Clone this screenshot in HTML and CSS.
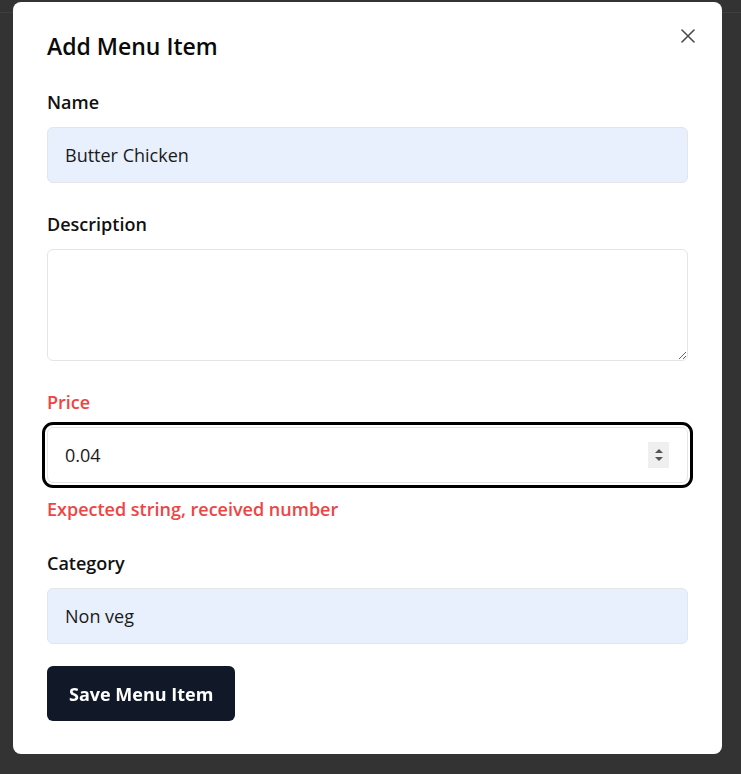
FILE: index.html
```html
<!DOCTYPE html>
<html lang="en">
<head>
    <meta charset="UTF-8">
    <meta name="viewport" content="width=device-width, initial-scale=1.0">
    <title>Add Menu Item</title>
    <link rel="stylesheet" href="styles.css">
</head>
<body>
    <div class="topbar"></div>
    <div class="modal">
        <button class="close-btn" type="button" aria-label="Close">
            <svg width="14" height="14" viewBox="0 0 14 14">
                <path d="M1 1 L13 13 M13 1 L1 13" stroke="#4b4b4b" stroke-width="1.6" stroke-linecap="round"/>
            </svg>
        </button>
        <h1>Add Menu Item</h1>
        <form id="menuForm">
            <div class="field">
                <label for="name">Name</label>
                <input type="text" id="name" class="input filled" value="Butter Chicken">
            </div>
            <div class="field">
                <label for="description">Description</label>
                <textarea id="description" class="input textarea"></textarea>
            </div>
            <div class="field has-error">
                <label for="price">Price</label>
                <div class="input number-box focused">
                    <input type="text" id="price" value="0.04" autofocus>
                    <span class="spinner">
                        <svg width="10" height="14" viewBox="0 0 10 14">
                            <path d="M1 5 L5 1 L9 5 Z M1 9 L9 9 L5 13 Z" fill="#555"/>
                        </svg>
                    </span>
                </div>
                <p class="error">Expected string, received number</p>
            </div>
            <div class="field">
                <label for="category">Category</label>
                <input type="text" id="category" class="input filled" value="Non veg">
            </div>
            <button type="submit" class="save-btn">Save Menu Item</button>
        </form>
    </div>
</body>
</html>
```

FILE: styles.css
```css
body {
    margin: 0;
    background-color: #333333;
    font-family: 'Open Sans', 'Noto Sans', sans-serif;
    color: #111111;
    min-height: 774px;
}
.topbar {
    height: 12px;
    border-bottom: 1px solid #3f3f3f;
    margin-bottom: -13px;
}
.modal {
    position: relative;
    width: 709px;
    box-sizing: border-box;
    margin: 2px 0 0 13px;
    padding: 28px 34px 33px;
    background: #ffffff;
    border-radius: 8px;
}
.close-btn {
    position: absolute;
    top: 27px;
    right: 27px;
    width: 14px;
    height: 14px;
    padding: 0;
    border: none;
    background: none;
    cursor: pointer;
    display: flex;
}
h1 {
    margin: 0 0 26px;
    font-size: 23px;
    font-weight: 600;
    line-height: 32px;
    color: #0a0a0a;
}
.field {
    margin-bottom: 27px;
}
label {
    display: block;
    font-size: 18px;
    font-weight: 600;
    line-height: 28px;
    margin-bottom: 11px;
    color: #111111;
}
.input {
    display: block;
    width: 100%;
    height: 56px;
    box-sizing: border-box;
    padding: 0 17px;
    border: 1px solid #e3e5e8;
    border-radius: 6px;
    background: #ffffff;
    font-family: inherit;
    font-size: 18px;
    color: #1a1a1a;
    outline: none;
}
.filled {
    background: #e8f0fe;
}
.textarea {
    height: 112px;
    padding: 12px 17px;
    resize: vertical;
}
.has-error label {
    color: #ef4444;
}
.has-error {
    margin-bottom: 26px;
}
.number-box {
    display: flex;
    align-items: center;
    padding-right: 18px;
}
.number-box input {
    flex: 1;
    border: none;
    outline: none;
    background: none;
    padding: 0;
    font-family: inherit;
    font-size: 18px;
    color: #1a1a1a;
    caret-color: #000000;
}
.focused {
    outline: 3px solid #000000;
    outline-offset: 2px;
    border-radius: 6px;
}
.spinner {
    display: flex;
    align-items: center;
    justify-content: center;
    width: 21px;
    height: 26px;
    background: #efefef;
}
.error {
    margin: 12px 0 0;
    font-size: 18px;
    font-weight: 600;
    line-height: 28px;
    color: #ef4444;
}
.save-btn {
    display: block;
    margin-top: -5px;
    height: 55px;
    padding: 0 22px;
    border: none;
    border-radius: 6px;
    background: #111827;
    color: #ffffff;
    font-family: inherit;
    font-size: 18px;
    font-weight: 700;
    cursor: pointer;
}
```
